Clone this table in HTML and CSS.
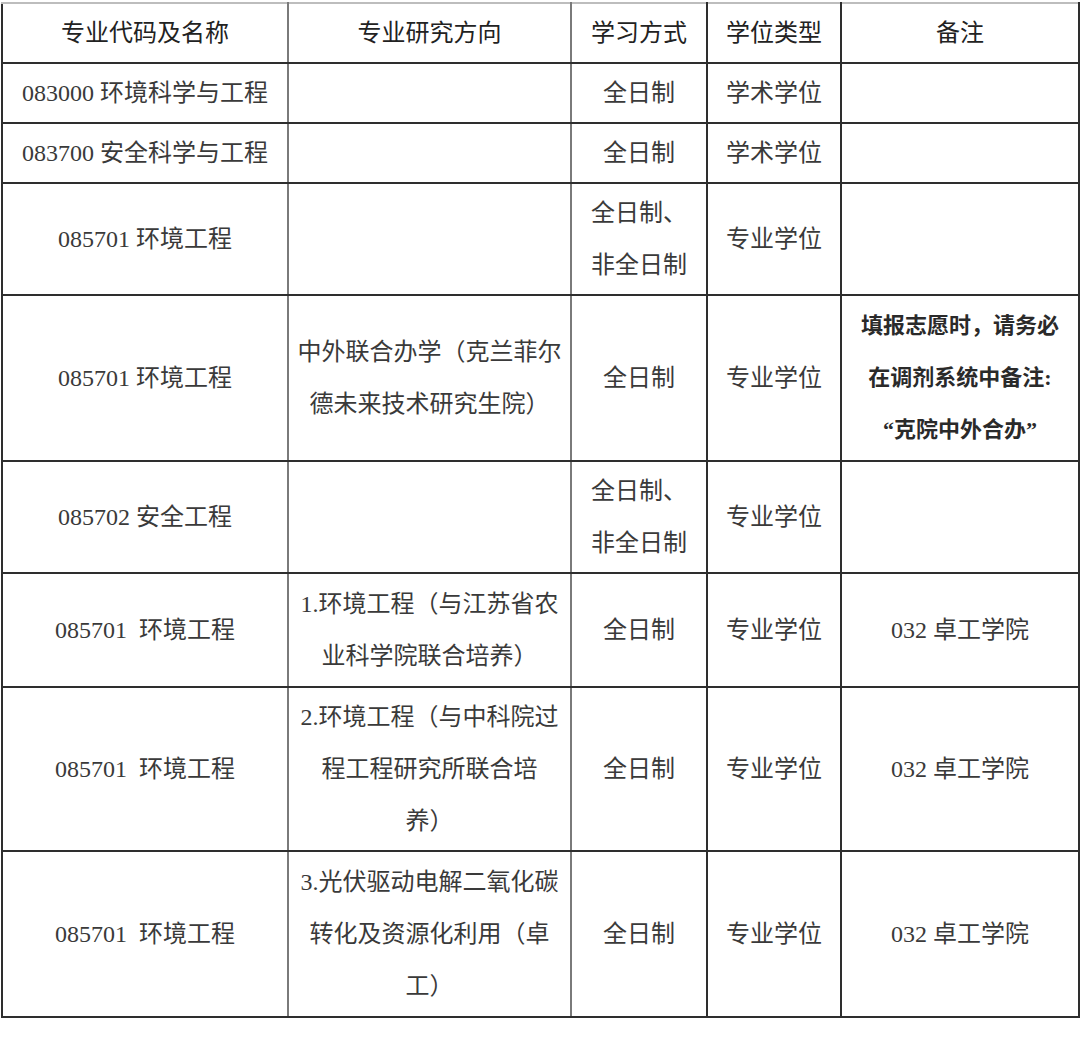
FILE: index.html
```html
<!DOCTYPE html>
<html lang="zh-CN">
<head>
<meta charset="utf-8">
<title>专业目录</title>
<link rel="stylesheet" href="styles.css">
</head>
<body>
<table class="grid">
  <colgroup>
    <col class="c1"><col class="c2"><col class="c3"><col class="c4"><col class="c5">
  </colgroup>
  <thead>
    <tr class="r-head">
      <th>专业代码及名称</th>
      <th>专业研究方向</th>
      <th>学习方式</th>
      <th>学位类型</th>
      <th>备注</th>
    </tr>
  </thead>
  <tbody>
    <tr class="r1">
      <td>083000 环境科学与工程</td>
      <td class="dir"></td>
      <td>全日制</td>
      <td>学术学位</td>
      <td></td>
    </tr>
    <tr class="r1">
      <td>083700 安全科学与工程</td>
      <td class="dir"></td>
      <td>全日制</td>
      <td>学术学位</td>
      <td></td>
    </tr>
    <tr class="r2">
      <td>085701 环境工程</td>
      <td class="dir"></td>
      <td>全日制、<br>非全日制</td>
      <td>专业学位</td>
      <td></td>
    </tr>
    <tr class="r3">
      <td>085701 环境工程</td>
      <td class="dir">中外联合办学（克兰菲尔<br>德未来技术研究生院）</td>
      <td>全日制</td>
      <td>专业学位</td>
      <td class="note">填报志愿时，请务必<br>在调剂系统中备注:<br>“克院中外合办”</td>
    </tr>
    <tr class="r2">
      <td>085702 安全工程</td>
      <td class="dir"></td>
      <td>全日制、<br>非全日制</td>
      <td>专业学位</td>
      <td></td>
    </tr>
    <tr class="r2b">
      <td>085701&nbsp;&nbsp;环境工程</td>
      <td class="dir">1.环境工程（与江苏省农<br>业科学院联合培养）</td>
      <td>全日制</td>
      <td>专业学位</td>
      <td>032 卓工学院</td>
    </tr>
    <tr class="r3b">
      <td>085701&nbsp;&nbsp;环境工程</td>
      <td class="dir">2.环境工程（与中科院过<br>程工程研究所联合培<br>养）</td>
      <td>全日制</td>
      <td>专业学位</td>
      <td>032 卓工学院</td>
    </tr>
    <tr class="r3c">
      <td>085701&nbsp;&nbsp;环境工程</td>
      <td class="dir">3.光伏驱动电解二氧化碳<br>转化及资源化利用（卓<br>工）</td>
      <td>全日制</td>
      <td>专业学位</td>
      <td>032 卓工学院</td>
    </tr>
  </tbody>
</table>
</body>
</html>
```

FILE: styles.css
```css
html, body {
  margin: 0;
  padding: 0;
  background: #ffffff;
}

body {
  font-family: "Liberation Serif", "Noto Sans CJK SC", serif;
  font-size: 24px;
  color: #3a3a3a;
}

.grid {
  border-collapse: collapse;
  table-layout: fixed;
  width: 1077px;
  margin: 2px 0 0 1px;
}

.c1 { width: 286px; }
.c2 { width: 283px; }
.c3 { width: 136px; }
.c4 { width: 134px; }
.c5 { width: 238px; }

.grid th,
.grid td {
  border: 2px solid #2e2e2e;
  text-align: center;
  vertical-align: middle;
  line-height: 52px;
  padding: 0 4px;
  white-space: nowrap;
  overflow: hidden;
}

.grid th {
  font-weight: normal;
  color: #222;
  border-top-color: #bdbdbd;
}

.grid th:nth-child(1),
.grid td:nth-child(1),
.grid th:nth-child(2),
.grid td:nth-child(2) {
  border-right-color: #7a7a7a;
}

.r-head th { height: 58px; }
.r1 td { height: 58px; }
.r2 td { height: 110px; }
.r2b td { height: 112px; }
.r3 td { height: 164px; }
.r3b td { height: 162px; }
.r3c td { height: 164px; }

.note {
  font-size: 22px;
  font-weight: bold;
  color: #2a2a2a;
}
```
